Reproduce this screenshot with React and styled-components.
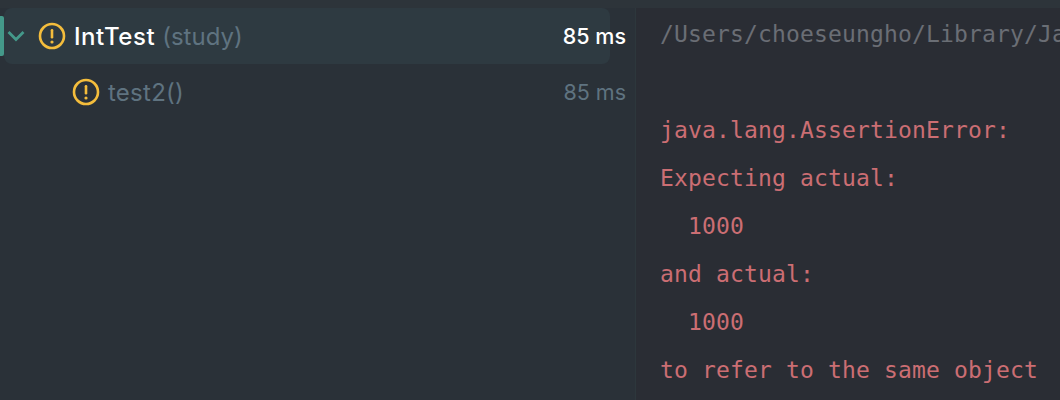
import React from "react";
import styled, { createGlobalStyle } from "styled-components";

const Global = createGlobalStyle`
  html, body { margin: 0; padding: 0; background: #2a3037; }
`;

const Page = styled.div`
  width: 1060px;
  height: 400px;
  overflow: hidden;
  display: flex;
  flex-direction: column;
  background: #2a3037;
`;
const TopStrip = styled.div`
  height: 8px;
  flex: none;
  background: #2d343a;
`;
const Body = styled.div`
  flex: 1;
  display: flex;
  min-height: 0;
`;
const TreePane = styled.div`
  width: 635px;
  flex: none;
  background: #2a3138;
  display: flex;
  flex-direction: column;
`;
const Divider = styled.div`
  width: 1px;
  flex: none;
  background: #2d373c;
`;
const Row = styled.div`
  height: 56px;
  margin-left: 4px;
  width: 606px;
  display: flex;
  align-items: center;
  border-radius: 8px;
  background: ${p => (p.$selected ? "#2e3a41" : "transparent")};
  padding-left: ${p => p.$indent}px;
  position: relative;
  box-sizing: border-box;
`;
const Marker = styled.div`
  position: absolute;
  left: -4px;
  top: 8px;
  width: 4px;
  height: 40px;
  border-radius: 0 2px 2px 0;
  background: #44998a;
`;
const Name = styled.span`
  margin-left: 8px;
  font-family: "Inter", "Noto Sans", sans-serif;
  font-size: 24px;
  letter-spacing: ${p => p.$spacing}px;
  white-space: nowrap;
  color: ${p => p.$color};
  font-weight: ${p => p.$weight || 400};
`;
const Pkg = styled.span`
  margin-left: 7px;
  font-family: "Inter", "Noto Sans", sans-serif;
  font-size: 24px;
  color: #5f7380;
`;
const Time = styled.span`
  position: absolute;
  right: -16px;
  font-family: "Inter", "Noto Sans", sans-serif;
  font-size: 21.5px;
  font-weight: ${p => p.$weight || 400};
  color: ${p => p.$color};
  white-space: nowrap;
`;
const Chevron = styled.svg`
  width: 20px;
  height: 20px;
  margin-right: 12px;
  flex: none;
`;
const Console = styled.pre`
  margin: 0;
  padding: 2px 0 0 24px;
  flex: 1;
  overflow: hidden;
  background: #2a2d34;
  font-family: "DejaVu Sans Mono", "Liberation Mono", monospace;
  font-size: 23px;
  letter-spacing: 0.15px;
  line-height: 48px;
`;
const Line = styled.div`
  height: 48px;
  color: ${p => (p.$muted ? "#6a6e75" : "#cb6e73")};
`;

function Warn({ size = 28 }) {
  return (
    <svg width={size} height={size} viewBox="0 0 28 28" style={{ flex: "none" }}>
      <circle cx="14" cy="14" r="12" fill="none" stroke="#f4bd3c" strokeWidth="2.6" />
      <rect x="12.7" y="7" width="2.6" height="9.5" rx="1.2" fill="#f4bd3c" />
      <circle cx="14" cy="20" r="1.6" fill="#f4bd3c" />
    </svg>
  );
}

export default function App() {
  return (
    <Page>
      <Global />
      <TopStrip />
      <Body>
        <TreePane>
          <Row $selected $indent={2}>
            <Marker />
            <Chevron viewBox="0 0 20 20">
              <path d="M2.5 6 L10 13.5 L17.5 6" fill="none" stroke="#44998a" strokeWidth="2.8" />
            </Chevron>
            <Warn />
            <Name $color="#ffffff" $weight={500} $spacing={0.55}>IntTest</Name>
            <Pkg>(study)</Pkg>
            <Time $color="#ffffff" $weight={500}>85 ms</Time>
          </Row>
          <Row $indent={68}>
            <Warn />
            <Name $color="#5f7380" $spacing={0.25}>test2()</Name>
            <Time $color="#5f7380">85 ms</Time>
          </Row>
        </TreePane>
        <Divider />
        <Console>
          <Line $muted>/Users/choeseungho/Library/Ja</Line>
          <Line />
          <Line>java.lang.AssertionError:</Line>
          <Line>Expecting actual:</Line>
          <Line>  1000</Line>
          <Line>and actual:</Line>
          <Line>  1000</Line>
          <Line>to refer to the same object</Line>
        </Console>
      </Body>
    </Page>
  );
}
